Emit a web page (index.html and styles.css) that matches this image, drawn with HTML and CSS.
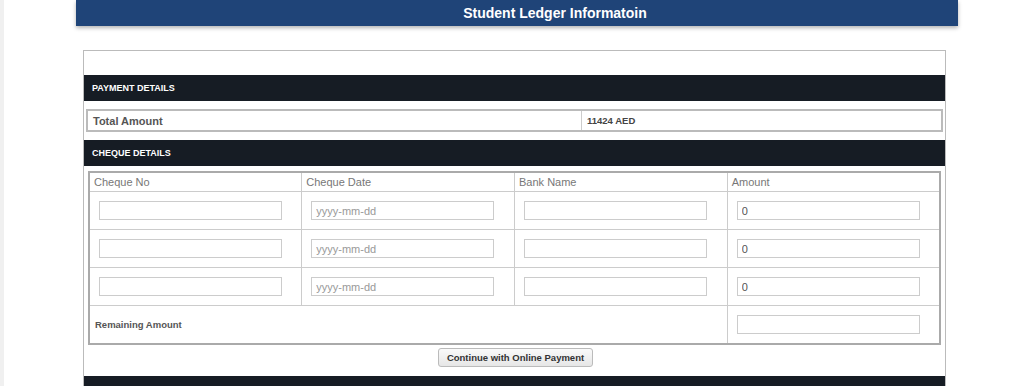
FILE: index.html
```html
<!DOCTYPE html>
<html lang="en">
<head>
<meta charset="UTF-8">
<meta name="viewport" content="width=device-width, initial-scale=1.0">
<title>Student Ledger Informatoin</title>
<link rel="stylesheet" href="styles.css">
</head>
<body>
<div class="page">
    <div class="top-bar">Student Ledger Informatoin</div>

    <div class="ledger">
        <div class="spacer"></div>
        <div class="section-bar">PAYMENT DETAILS</div>
        <table class="total-table">
            <tr>
                <td class="total-label">Total Amount</td>
                <td class="total-value">11424 AED</td>
            </tr>
        </table>

        <div class="section-bar">CHEQUE DETAILS</div>
        <table class="cheque-table">
            <tr class="head">
                <td>Cheque No</td>
                <td>Cheque Date</td>
                <td>Bank Name</td>
                <td>Amount</td>
            </tr>
            <tr>
                <td><input type="text" class="field"></td>
                <td><input type="text" class="field" placeholder="yyyy-mm-dd"></td>
                <td><input type="text" class="field"></td>
                <td><input type="text" class="field" value="0"></td>
            </tr>
            <tr>
                <td><input type="text" class="field"></td>
                <td><input type="text" class="field" placeholder="yyyy-mm-dd"></td>
                <td><input type="text" class="field"></td>
                <td><input type="text" class="field" value="0"></td>
            </tr>
            <tr>
                <td><input type="text" class="field"></td>
                <td><input type="text" class="field" placeholder="yyyy-mm-dd"></td>
                <td><input type="text" class="field"></td>
                <td><input type="text" class="field" value="0"></td>
            </tr>
            <tr>
                <td colspan="3" class="remaining">Remaining Amount</td>
                <td><input type="text" class="field"></td>
            </tr>
        </table>

        <div class="actions">
            <button class="btn">Continue with Online Payment</button>
        </div>
        <div class="footer-bar"></div>
    </div>
</div>
</body>
</html>
```

FILE: styles.css
```css
body {
    margin: 0;
    font-family: "Liberation Sans", Arial, sans-serif;
    background-color: #fff;
    color: #555;
    border-left: 4px solid #f0f0f0;
}
.page {
    width: 882px;
    margin-left: 72px;
}
.top-bar {
    height: 26px;
    line-height: 26px;
    background-color: #1f4478;
    color: #fff;
    font-size: 14px;
    font-weight: bold;
    text-align: center;
    padding-left: 76px;
    box-sizing: border-box;
    box-shadow: 0 2px 4px rgba(0, 0, 0, 0.3);
}
.ledger {
    margin: 24px 12px 0 7px;
    border: 1px solid #bbb;
    border-bottom: none;
}
.spacer {
    height: 24px;
}
.section-bar {
    height: 26px;
    line-height: 26px;
    background-color: #161c24;
    color: #fff;
    font-size: 9px;
    font-weight: bold;
    padding-left: 8px;
}
.footer-bar {
    height: 10px;
    background-color: #161c24;
}
.total-table {
    width: 857px;
    margin: 8px 0 8px 2px;
    border-collapse: collapse;
    border: 2px solid #bbb;
}
.total-table td {
    height: 19px;
    padding: 0 5px;
    border-left: 1px solid #ccc;
}
.total-label {
    width: 483px;
    font-size: 11px;
    font-weight: bold;
    color: #555;
}
.total-value {
    font-size: 9.5px;
    font-weight: bold;
    color: #444;
}
.cheque-table {
    width: 853px;
    margin: 5px 0 0 4px;
    border-collapse: collapse;
    border: 2px solid #aaa;
    table-layout: fixed;
}
.cheque-table td {
    border: 1px solid #ccc;
    height: 37px;
    padding: 0 0 0 9px;
    font-size: 11px;
    color: #777;
}
.cheque-table .head td {
    height: 18px;
    padding-left: 4px;
}
.cheque-table .remaining {
    font-size: 9.5px;
    font-weight: bold;
    color: #555;
    padding-left: 5px;
}
.field {
    width: 183px;
    height: 19px;
    box-sizing: border-box;
    border: 1px solid #ccc;
    padding: 0 4px;
    font-family: "Liberation Sans", Arial, sans-serif;
    font-size: 11px;
    color: #555;
    display: block;
}
.field::placeholder {
    color: #999;
}
.actions {
    text-align: center;
    padding: 2px 0 9px;
}
.btn {
    height: 19px;
    padding: 0 8px;
    font-family: "Liberation Sans", Arial, sans-serif;
    font-size: 9.5px;
    font-weight: bold;
    color: #333;
    background: linear-gradient(#fafafa, #e6e6e6);
    border: 1px solid #bbb;
    border-radius: 3px;
    margin-left: 2px;
}
```
